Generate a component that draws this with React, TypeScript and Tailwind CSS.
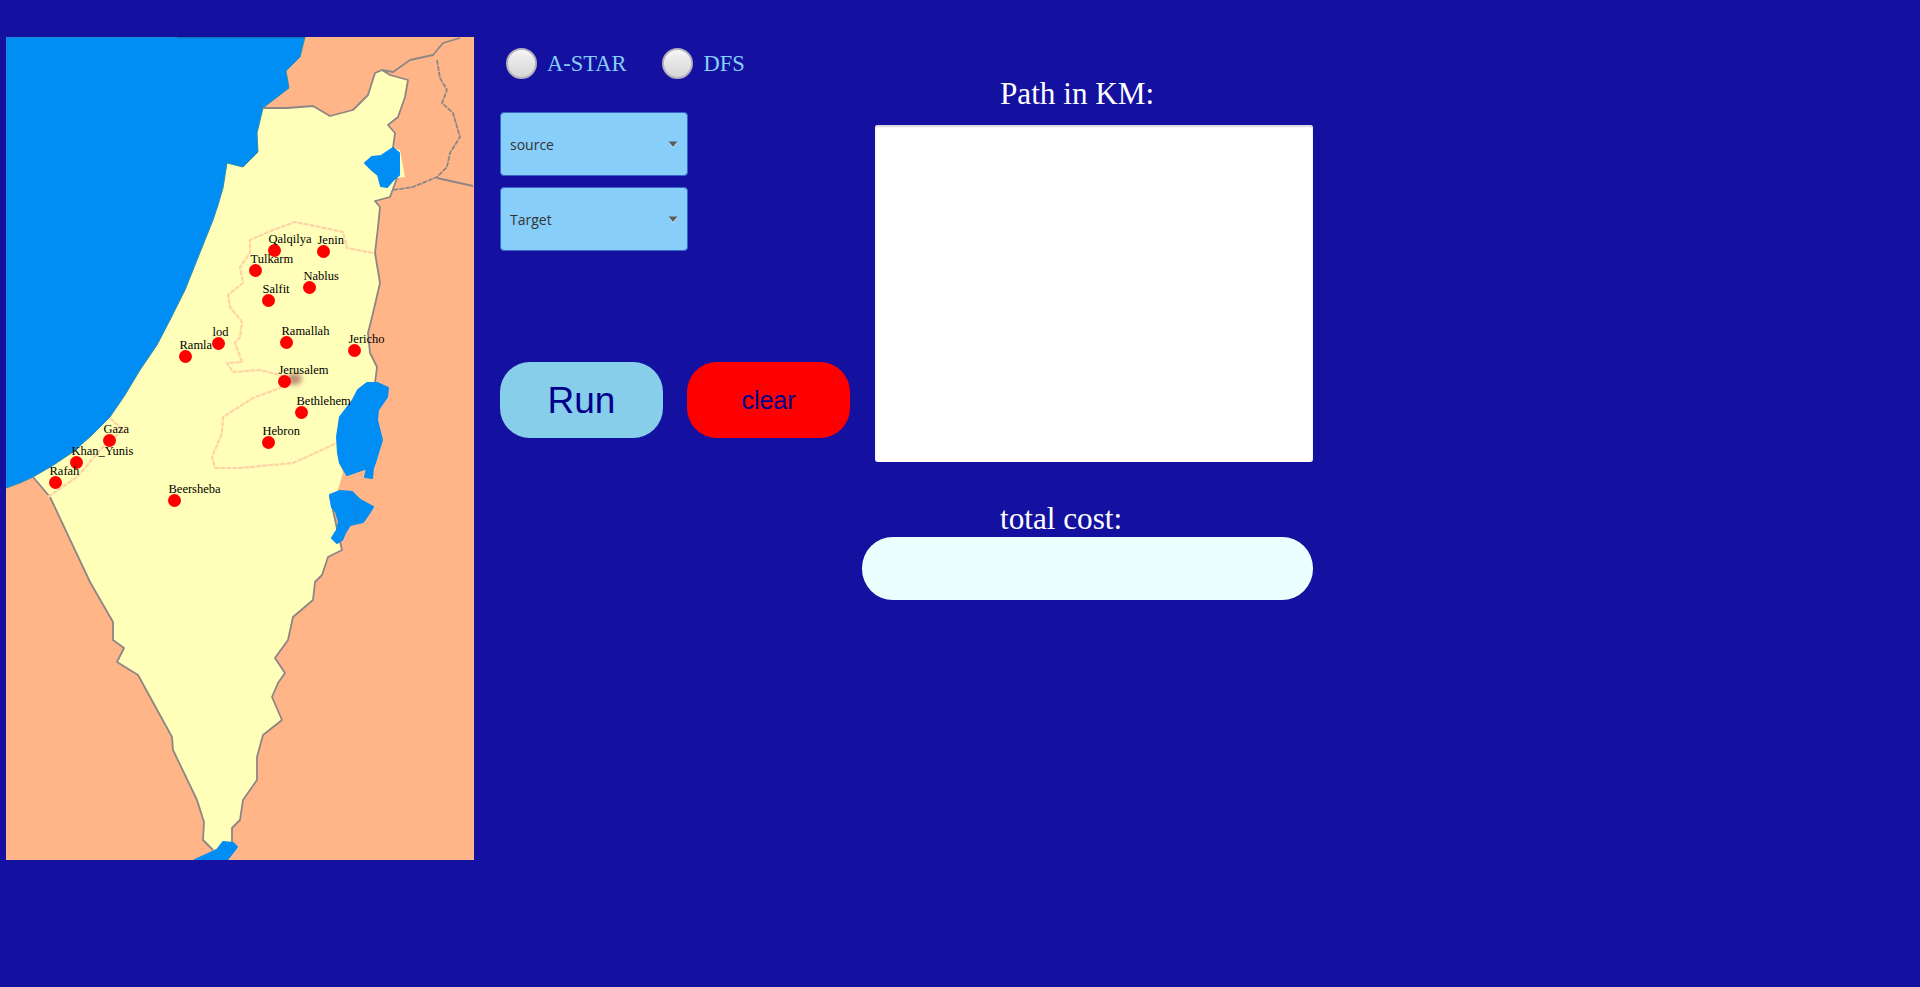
const coast = "263,108 257,133 258,152 243,167 227,163 223,188 218,205 213,220 205,240 197,260 185,290 170,320 157,345 140,370 125,395 110,417 92,435 73,452 52,466 33,477";
const land = `${coast} 50,497 90,582 113,622 113,640 124,648 117,662 138,675 172,737 173,750 197,800 204,822 203,840 213,850 232,843 232,828 240,820 243,800 257,780 257,757 263,735 282,720 272,697 278,683 285,673 275,658 288,640 293,617 313,600 315,582 322,575 328,557 342,550 338,540 330,497 337,493 343,473 337,447 340,417 358,390 375,383 377,367 370,353 368,333 373,313 380,283 375,253 378,227 380,207 375,201 390,197 397,178 405,177 400,150 393,148 395,133 388,125 398,117 405,97 408,80 390,75 382,70 375,73 368,95 353,110 330,116 313,106 287,108`;
const sea = `6,37 305,37 300,57 286,71 289,88 ${coast} 20,483 6,488`;
const borderOut = "263,108 287,108 313,106 330,116 353,110 368,95 375,73 382,70 390,75 408,80 405,97 398,117 388,125 395,133 393,148";
const borderEast = "397,178 390,197 375,201 380,207 378,227 375,253 380,283 373,313 368,333 370,353 377,367 375,383";
const borderSouth = "337,493 330,497 342,550 328,557 322,575 315,582 313,600 293,617 288,640 275,658 285,673 278,683 272,697 282,720 263,735 257,757 257,780 243,800 240,820 232,828 232,843";
const borderWest = "213,850 203,840 204,822 197,800 173,750 172,737 138,675 117,662 124,648 113,640 113,622 90,582 50,497 33,477";
const syria = "460,38 443,43 433,55 410,60 393,72 382,70";
const syria2 = "437,60 440,78 447,90 442,103 453,113 460,137 450,153 447,167 437,177 413,187 393,190";
const jordan = "437,178 473,186";
const westBank = "373,253 347,248 343,232 320,227 295,222 273,230 250,240 250,253 240,267 243,283 228,295 230,307 242,322 240,337 235,343 242,362 227,363 233,372 260,370 280,375 288,380 280,388 253,398 223,417 222,433 212,457 215,468 240,468 293,463 337,443";
const gazaStrip = "110,418 123,430 103,447 77,477 48,497";
const kinneret = "365,163 372,157 381,156 393,148 399,153 399,175 393,180 387,187 381,186 378,175 372,170";
const deadSea = "367,383 377,383 388,388 387,397 378,410 377,420 382,440 378,453 375,463 373,468 372,478 365,477 367,468 353,473 347,475 340,463 338,453 337,437 340,417 353,400 358,390";
const southBlob = "330,495 340,491 352,492 360,500 373,507 368,515 363,522 350,525 345,533 342,540 337,543 332,538 337,530 339,522 336,512 332,507";
const aqaba = "195,860 217,850 223,842 233,843 237,847 227,860";

const dots = [
  [275, 251], [324, 252], [256, 271], [310, 288], [269, 301], [219, 344], [287, 343], [355, 351],
  [186, 357], [285, 382], [302, 413], [269, 443], [110, 441], [77, 463], [56, 483], [175, 501],
];

const labels: [string, number, number][] = [
  ["Qalqilya", 269, 243], ["Jenin", 318, 244], ["Tulkarm", 251, 263], ["Nablus", 304, 280],
  ["Salfit", 263, 293], ["lod", 213, 336], ["Ramallah", 282, 335], ["Jericho", 349, 343],
  ["Ramla", 180, 349], ["Jerusalem", 279, 374], ["Bethlehem", 297, 405], ["Hebron", 263, 435],
  ["Gaza", 104, 433], ["Khan_Yunis", 72, 455], ["Rafah", 50, 475], ["Beersheba", 169, 493],
];

function Radio({ label, className }: { label: string; className: string }) {
  return (
    <div className={`flex items-center gap-[10px] ${className}`}>
      <span className="w-[31px] h-[31px] rounded-full border-[2px] border-[#b4b0bc] bg-gradient-to-b from-[#f4f4f4] to-[#d6d6d6] shadow-[inset_0_1px_0_#ffffff]" />
      <span className="text-[22.5px] leading-[32px] pt-[1px] text-[#87cefa] font-['Liberation_Serif',serif]">{label}</span>
    </div>
  );
}

function Select({ label }: { label: string }) {
  return (
    <div className="w-[188px] h-[64px] rounded-[4px] bg-[#87cefa] border border-[#3a66cc] flex items-center justify-between pl-[9px] pr-[9px]">
      <span className="text-[14px] text-[#333333] font-['Open_Sans',sans-serif]">{label}</span>
      <svg width="10" height="7" viewBox="0 0 10 7">
        <path d="M0.5 1.5 L9.5 1.5 L5 7 Z" fill="#ffffff" opacity="0.6" />
        <path d="M0.5 0.5 L9.5 0.5 L5 6 Z" fill="#5c5c5c" />
      </svg>
    </div>
  );
}

export default function App() {
  return (
    <div className="flex min-h-screen bg-[#1411a0] pl-[6px] pt-[37px] overflow-hidden">
      <div className="relative w-[468px] h-[823px] shrink-0 overflow-hidden bg-[#ffb587]">
        <svg className="block" width="468" height="823" viewBox="6 37 468 823">
          <defs>
            <filter id="soft" x="-5%" y="-5%" width="110%" height="110%">
              <feGaussianBlur stdDeviation="0.6" />
            </filter>
            <filter id="smudge" x="-80%" y="-80%" width="260%" height="260%">
              <feGaussianBlur stdDeviation="2.4" />
            </filter>
          </defs>
          <rect x="6" y="37" width="468" height="823" fill="#ffb587" />
          <g filter="url(#soft)">
            <polygon points={land} fill="#ffffb9" />
            <polygon points={sea} fill="#008ef5" stroke="#2f8fb0" strokeWidth="1" />
            <line x1="177" y1="37.5" x2="305" y2="37.5" stroke="#0578b8" strokeWidth="1.5" />
            <g fill="none" stroke="#8d8685" strokeWidth="1.8" strokeLinejoin="round">
              <polyline points={borderOut} />
              <polyline points={borderEast} />
              <polyline points={borderSouth} />
              <polyline points={borderWest} />
              <polyline points={syria} />
              <polyline points={syria2} strokeDasharray="5 1" />
              <polyline points={jordan} />
            </g>
            <g fill="none" stroke="#ffd3a6" strokeWidth="2.2" strokeLinejoin="round" strokeDasharray="5 1">
              <polyline points={westBank} />
              <polyline points={gazaStrip} />
            </g>
            <g fill="#008ef5" stroke="#008ef5" strokeWidth="2" strokeLinejoin="round">
              <polygon points={kinneret} />
              <polygon points={deadSea} />
              <polygon points={southBlob} />
              <polygon points={aqaba} />
            </g>
            <polyline points="350,492 358,507 355,523" fill="none" stroke="#1f7fd0" strokeWidth="1" />
          </g>
          <ellipse cx="294" cy="379" rx="8" ry="6" fill="#c09078" filter="url(#smudge)" />
        </svg>
        {dots.map(([x, y]) => (
          <span
            key={`${x}-${y}`}
            className="absolute w-[13px] h-[13px] rounded-full bg-[#ff0000]"
            style={{ left: x - 6 - 7, top: y - 37 - 7 }}
          />
        ))}
        {labels.map(([name, x, y]) => (
          <span
            key={name}
            className="absolute text-[12.5px] leading-[12px] text-black font-['Liberation_Serif',serif] whitespace-nowrap"
            style={{ left: x - 6.5, top: y - 37 - 10 }}
          >
            {name}
          </span>
        ))}
      </div>

      <div className="ml-[26px] w-[350px] shrink-0 flex flex-col">
        <div className="flex pt-[10px]">
          <Radio label="A-STAR" className="ml-[6px]" />
          <Radio label="DFS" className="ml-[36px]" />
        </div>
        <div className="flex flex-col gap-[11px] mt-[32px]">
          <Select label="source" />
          <Select label="Target" />
        </div>
        <div className="flex gap-[24px] mt-[111px]">
          <button className="w-[163px] h-[76px] pt-[2px] rounded-[30px] bg-[#87ceeb] text-[#00008b] text-[37px] font-['Liberation_Sans',sans-serif]">
            Run
          </button>
          <button className="w-[163px] h-[76px] pt-[2px] rounded-[30px] bg-[#ff0000] text-[#00008b] text-[25px] font-['Liberation_Sans',sans-serif]">
            clear
          </button>
        </div>
      </div>

      <div className="ml-[12px] w-[451px] shrink-0 flex flex-col items-start mt-[39px]">
        <div className="ml-[138px] text-[31.2px] leading-[36px] text-white font-['Liberation_Serif',serif]">Path in KM:</div>
        <div className="ml-[13px] mt-[13px] w-[438px] h-[337px] rounded-[3px] bg-white shadow-[inset_0_2px_2px_#d9d6dc]" />
        <div className="ml-[138px] mt-[39px] text-[31.2px] leading-[36px] text-white font-['Liberation_Serif',serif]">total cost:</div>
        <div className="w-[451px] h-[63px] rounded-[31px] bg-[#ebffff]" />
      </div>
    </div>
  );
}
